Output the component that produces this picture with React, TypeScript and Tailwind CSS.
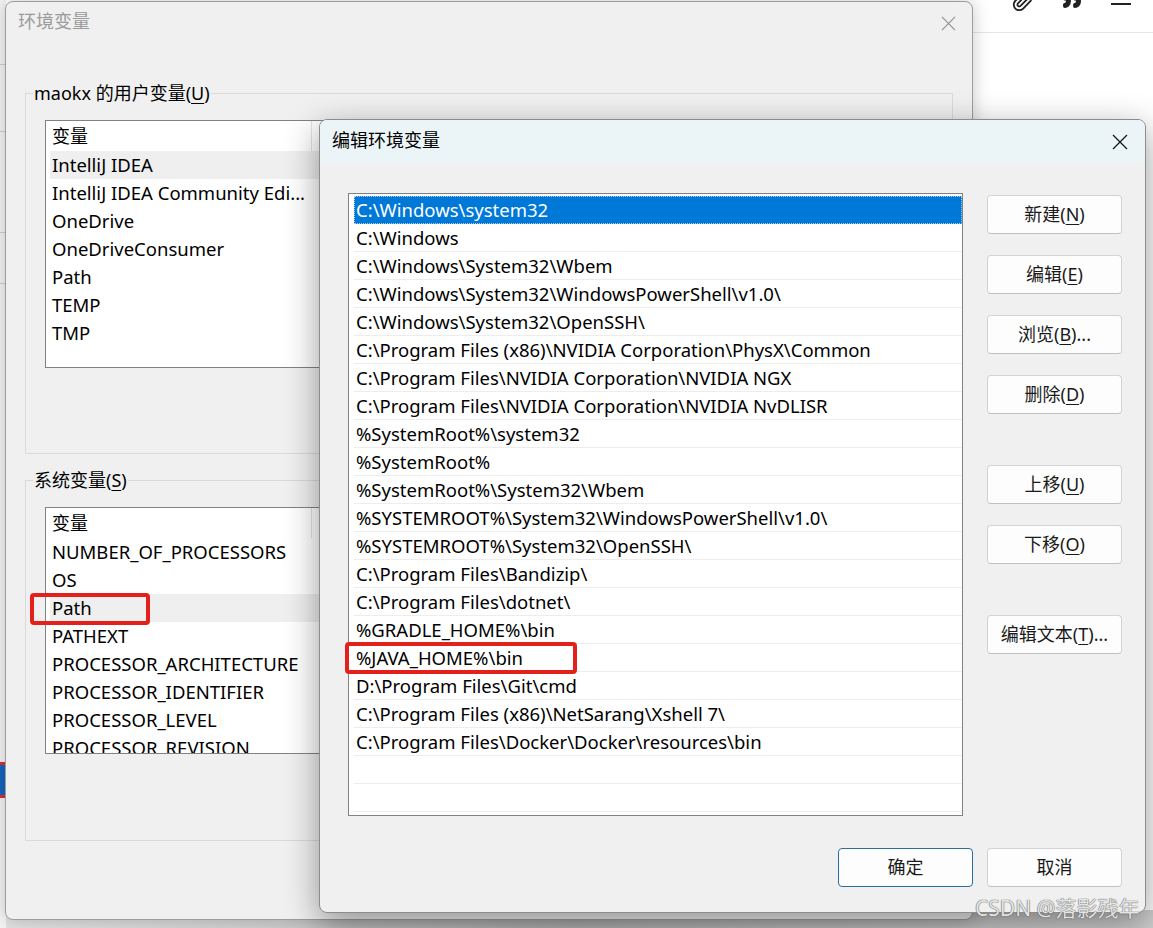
import React from 'react';
import { Paperclip, Quote } from 'lucide-react';

const userVars = ['IntelliJ IDEA', 'IntelliJ IDEA Community Edi...', 'OneDrive', 'OneDriveConsumer', 'Path', 'TEMP', 'TMP'];

const sysVars = [
  'NUMBER_OF_PROCESSORS',
  'OS',
  'Path',
  'PATHEXT',
  'PROCESSOR_ARCHITECTURE',
  'PROCESSOR_IDENTIFIER',
  'PROCESSOR_LEVEL',
  'PROCESSOR_REVISION',
];

const paths = [
  'C:\\Windows\\system32',
  'C:\\Windows',
  'C:\\Windows\\System32\\Wbem',
  'C:\\Windows\\System32\\WindowsPowerShell\\v1.0\\',
  'C:\\Windows\\System32\\OpenSSH\\',
  'C:\\Program Files (x86)\\NVIDIA Corporation\\PhysX\\Common',
  'C:\\Program Files\\NVIDIA Corporation\\NVIDIA NGX',
  'C:\\Program Files\\NVIDIA Corporation\\NVIDIA NvDLISR',
  '%SystemRoot%\\system32',
  '%SystemRoot%',
  '%SystemRoot%\\System32\\Wbem',
  '%SYSTEMROOT%\\System32\\WindowsPowerShell\\v1.0\\',
  '%SYSTEMROOT%\\System32\\OpenSSH\\',
  'C:\\Program Files\\Bandizip\\',
  'C:\\Program Files\\dotnet\\',
  '%GRADLE_HOME%\\bin',
  '%JAVA_HOME%\\bin',
  'D:\\Program Files\\Git\\cmd',
  'C:\\Program Files (x86)\\NetSarang\\Xshell 7\\',
  'C:\\Program Files\\Docker\\Docker\\resources\\bin',
  '',
  '',
];

function CloseX({ size, color }: { size: number; color: string }) {
  return (
    <svg width={size} height={size} viewBox="0 0 16 16" fill="none">
      <path d="M1 1L15 15M15 1L1 15" stroke={color} strokeWidth="1.2" />
    </svg>
  );
}

function Key({ k }: { k: string }) {
  return <span className="underline decoration-1 underline-offset-[3px]">{k}</span>;
}

function Btn({ children, primary, className = '' }: { children: React.ReactNode; primary?: boolean; className?: string }) {
  return (
    <div
      className={`w-[135px] h-[39px] shrink-0 rounded-[4px] border bg-[#fdfdfd] flex items-center justify-center text-[18px] text-[#1a1a1a] ${
        primary ? 'border-[#2b6fa0]' : 'border-[#d3d3d3] border-b-[#c0c0c0]'
      } ${className}`}
    >
      {children}
    </div>
  );
}

function VarList({ rows, selected, height }: { rows: string[]; selected: number; height: string }) {
  return (
    <div className={`${height} border border-[#828282] bg-white overflow-hidden text-[18.5px]`}>
      <div className="h-[30px] flex items-center">
        <div className="w-[266px] h-full flex items-center pl-[6px] border-r border-[#e3e3e3] text-[18px]">变量</div>
      </div>
      {rows.map((name, i) => (
        <div key={name + i} className={`h-[28px] ml-[4px] flex items-center ${i === selected ? 'bg-[#efefef]' : ''}`}>
          <div className="w-[262px] pl-[2px] whitespace-nowrap overflow-hidden">{name}</div>
        </div>
      ))}
    </div>
  );
}

function GroupBox({ label, list }: { label: React.ReactNode; list: React.ReactNode }) {
  return (
    <div className="relative h-[361px] border border-[#dadada] pt-[26px] pl-[19px] pr-[17px]">
      <div className="absolute -top-[13px] left-[7px] px-[1px] bg-[#f0f0f0] text-[18px] leading-[24px]">{label}</div>
      {list}
    </div>
  );
}

export default function App() {
  return (
    <div className="relative w-[1153px] h-[928px] overflow-hidden bg-white text-black font-['Noto_Sans','Noto_Sans_CJK_SC',sans-serif] text-[18px]">
      {/* page behind, bottom shade */}
      <div className="absolute left-0 top-[910px] w-[1153px] h-[18px] bg-gradient-to-r from-[#e2e2e2] via-[#b9b9b9] to-[#cfcfcf]" />

      {/* page behind, left edge */}
      <div className="absolute left-0 top-0 w-[6px] h-[928px] bg-[#f4f4f4]">
        <div className="mt-[64px] h-px bg-[#cfcfcf]" />
        <div className="mt-[66px] h-px bg-[#cfcfcf]" />
        <div className="mt-[100px] h-px bg-[#cfcfcf]" />
        <div className="mt-[50px] h-px bg-[#cfcfcf]" />
        <div className="mt-[478px] h-[3px] bg-[#e0302a]" />
        <div className="h-[30px] bg-[#1565c0]" />
        <div className="h-[3px] bg-[#e0302a]" />
      </div>

      {/* page behind, top right toolbar */}
      <div className="absolute left-[973px] top-0 w-[180px] h-[120px] bg-white">
        <div className="h-[33px] border-b border-[#e6e6e6] flex items-start pl-[38px] gap-[28px]">
          <Paperclip className="-mt-[10px] w-[22px] h-[22px] text-[#222]" strokeWidth={2} />
          <Quote className="-mt-[12px] w-[22px] h-[22px] text-[#222]" fill="#222" strokeWidth={1.5} />
          <div className="mt-[3px] w-[20px] h-[2px] bg-[#222]" />
        </div>
      </div>

      {/* 环境变量 (back window) */}
      <div className="absolute left-[5px] top-[1px] w-[968px] h-[919px] rounded-[8px] border border-[#9c9c9c] bg-[#f0f0f0] shadow-[0_0_18px_rgba(0,0,0,0.22)] flex flex-col">
        <div className="h-[42px] shrink-0 flex items-center justify-between pl-[12px] pr-[16px]">
          <span className="text-[18px] text-[#9a9a9a] -mt-[4px]">环境变量</span>
          <CloseX size={15} color="#8e8e8e" />
        </div>
        <div className="flex flex-col px-[19px] pt-[49px]">
          <GroupBox
            label={<span>maokx 的用户变量(<Key k="U" />)</span>}
            list={<VarList rows={userVars} selected={0} height="h-[248px]" />}
          />
          <div className="mt-[26px]">
            <GroupBox
              label={<span>系统变量(<Key k="S" />)</span>}
              list={<VarList rows={sysVars} selected={2} height="h-[247px]" />}
            />
          </div>
        </div>
      </div>

      {/* 编辑环境变量 (front dialog) */}
      <div className="absolute left-[319px] top-[119px] w-[827px] h-[794px] rounded-[8px] border border-[#8c8c8c] bg-[#f0f0f0] overflow-hidden shadow-[0_10px_34px_rgba(0,0,0,0.4)] flex flex-col">
        <div className="h-[43px] shrink-0 bg-[#ebf4f7] flex items-center justify-between pl-[12px] pr-[17px]">
          <span className="text-[18px] -mt-[2px]">编辑环境变量</span>
          <CloseX size={16} color="#111" />
        </div>
        <div className="flex flex-col pt-[30px] pl-[28px] pr-[23px]">
          <div className="flex gap-[24px]">
            <div className="w-[615px] h-[623px] shrink-0 border border-[#828282] bg-white pt-[2px] overflow-hidden text-[18.5px]">
              {paths.map((p, i) => (
                <div
                  key={i}
                  className={`h-[28px] ml-[5px] pl-[2px] flex items-center whitespace-nowrap ${
                    i === 0
                      ? 'bg-[#0078d7] text-white outline outline-1 outline-dotted outline-[#a8cdee] -outline-offset-1'
                      : 'border-b border-[#ededed]'
                  }`}
                >
                  {p}
                </div>
              ))}
            </div>
            <div className="flex flex-col">
              <Btn className="mt-[2px]">新建(<Key k="N" />)</Btn>
              <Btn className="mt-[21px]">编辑(<Key k="E" />)</Btn>
              <Btn className="mt-[21px]">浏览(<Key k="B" />)...</Btn>
              <Btn className="mt-[21px]">删除(<Key k="D" />)</Btn>
              <Btn className="mt-[51px]">上移(<Key k="U" />)</Btn>
              <Btn className="mt-[21px]">下移(<Key k="O" />)</Btn>
              <Btn className="mt-[51px]">编辑文本(<Key k="T" />)...</Btn>
            </div>
          </div>
          <div className="mt-[32px] flex justify-end gap-[14px]">
            <Btn primary>确定</Btn>
            <Btn>取消</Btn>
          </div>
        </div>
      </div>

      {/* annotation boxes */}
      <div className="absolute left-[30px] top-[593px] w-[120px] h-[32px] rounded-[4px] border-[4px] border-[#e3201c]" />
      <div className="absolute left-[345px] top-[642px] w-[232px] h-[32px] rounded-[4px] border-[4px] border-[#e3201c]" />

      {/* watermark */}
      <div className="absolute left-[975px] top-[894px] text-[21px] leading-[28px] whitespace-nowrap text-[rgba(255,255,255,0.85)] [text-shadow:0_0_1px_#555,0_0_1px_#555]">
        CSDN @落影残年
      </div>
    </div>
  );
}
